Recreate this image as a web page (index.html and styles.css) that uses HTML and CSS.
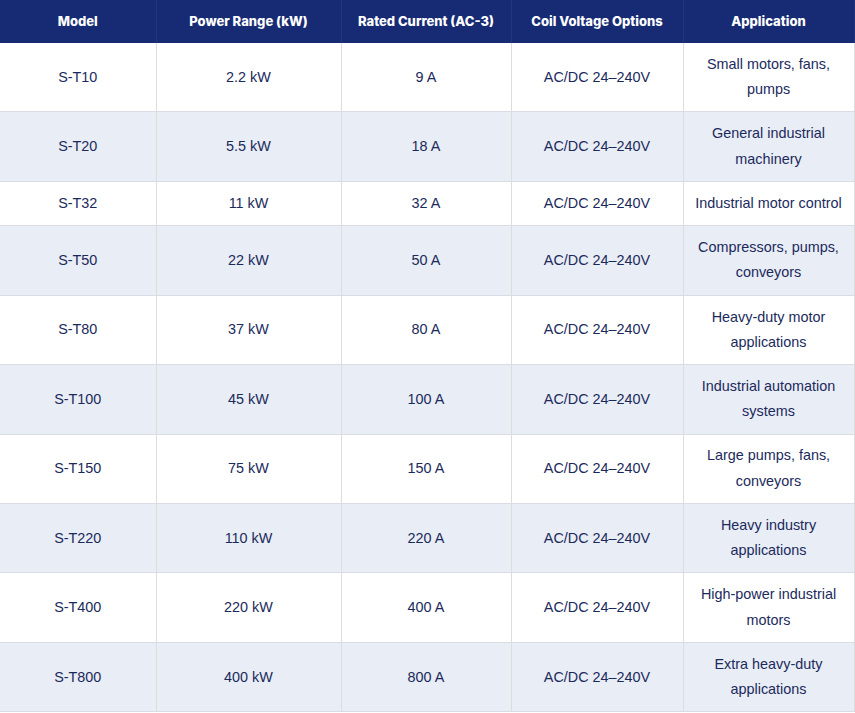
FILE: index.html
```html
<!DOCTYPE html>
<html lang="en">
<head>
<meta charset="utf-8">
<title>Contactor Models</title>
<link rel="stylesheet" href="styles.css">
</head>
<body>
<table class="spec-table">
  <colgroup>
    <col class="c1"><col class="c2"><col class="c3"><col class="c4"><col class="c5">
  </colgroup>
  <thead>
    <tr>
      <th>Model</th>
      <th>Power Range (kW)</th>
      <th>Rated Current (AC-3)</th>
      <th>Coil Voltage Options</th>
      <th>Application</th>
    </tr>
  </thead>
  <tbody>
    <tr><td>S-T10</td><td>2.2 kW</td><td>9 A</td><td>AC/DC 24–240V</td><td>Small motors, fans, pumps</td></tr>
    <tr><td>S-T20</td><td>5.5 kW</td><td>18 A</td><td>AC/DC 24–240V</td><td>General industrial machinery</td></tr>
    <tr><td>S-T32</td><td>11 kW</td><td>32 A</td><td>AC/DC 24–240V</td><td>Industrial motor control</td></tr>
    <tr><td>S-T50</td><td>22 kW</td><td>50 A</td><td>AC/DC 24–240V</td><td>Compressors, pumps, conveyors</td></tr>
    <tr><td>S-T80</td><td>37 kW</td><td>80 A</td><td>AC/DC 24–240V</td><td>Heavy-duty motor applications</td></tr>
    <tr><td>S-T100</td><td>45 kW</td><td>100 A</td><td>AC/DC 24–240V</td><td>Industrial automation systems</td></tr>
    <tr><td>S-T150</td><td>75 kW</td><td>150 A</td><td>AC/DC 24–240V</td><td>Large pumps, fans, conveyors</td></tr>
    <tr><td>S-T220</td><td>110 kW</td><td>220 A</td><td>AC/DC 24–240V</td><td>Heavy industry applications</td></tr>
    <tr><td>S-T400</td><td>220 kW</td><td>400 A</td><td>AC/DC 24–240V</td><td>High-power industrial motors</td></tr>
    <tr><td>S-T800</td><td>400 kW</td><td>800 A</td><td>AC/DC 24–240V</td><td>Extra heavy-duty applications</td></tr>
  </tbody>
</table>
</body>
</html>
```
FILE: styles.css
```css
html, body {
  margin: 0;
  padding: 0;
  background: #ffffff;
}

.spec-table {
  width: 854px;
  border-collapse: collapse;
  table-layout: fixed;
  font-family: "Liberation Sans", Arial, sans-serif;
  font-size: 14.4px;
  color: #1b2a5c;
}

.c1 { width: 156px; }
.c2 { width: 185px; }
.c3 { width: 170px; }
.c4 { width: 172px; }
.c5 { width: 171px; }

.spec-table th {
  background: #172b74;
  color: #ffffff;
  font-family: Inter, "Open Sans", sans-serif;
  font-weight: 800;
  font-size: 13px;
  line-height: 19px;
  padding: 12px 8px;
  text-align: center;
  border-right: 1px solid #22367f;
}

.spec-table td {
  text-align: center;
  vertical-align: middle;
  line-height: 25.3px;
  padding: 8.95px 10px;
  border-right: 1px solid #dddddd;
  border-bottom: 1px solid #d9dce2;
}

.spec-table tbody tr:nth-child(even) td {
  background: #e9edf5;
}
```
